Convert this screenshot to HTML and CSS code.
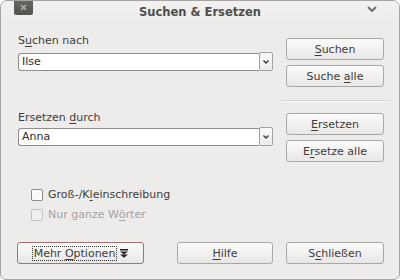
FILE: index.html
```html
<!DOCTYPE html>
<html lang="de">
<head>
    <meta charset="UTF-8">
    <title>Suchen &amp; Ersetzen</title>
    <link rel="stylesheet" href="styles.css">
</head>
<body>
    <div class="window">
        <div class="titlebar">
            <div class="tb-left">
                <span class="close-btn">
                    <svg width="7" height="7" viewBox="0 0 7 7"><path d="M1 1 L6 6 M6 1 L1 6" stroke="#b4b3b0" stroke-width="1.4"/></svg>
                </span>
            </div>
            <div class="title">Suchen &amp; Ersetzen</div>
            <div class="tb-right">
                <svg width="10" height="6" viewBox="0 0 10 6"><path d="M1 1 L5 5 L9 1" fill="none" stroke="#6f6e6c" stroke-width="2"/></svg>
            </div>
        </div>

        <div class="content">
            <div class="field-row first">
                <div class="field">
                    <div class="field-label">S<u>u</u>chen nach</div>
                    <div class="combo">
                        <div class="combo-text">Ilse</div>
                        <div class="combo-btn">
                            <svg width="6" height="4" viewBox="0 0 6 4"><path d="M0.5 0.5 L3 3 L5.5 0.5" fill="none" stroke="#333" stroke-width="1.3"/></svg>
                        </div>
                    </div>
                </div>
                <div class="btn-col">
                    <button class="btn"><u>S</u>uchen</button>
                    <button class="btn">Suche <u>a</u>lle</button>
                </div>
            </div>

            <div class="separator"></div>

            <div class="field-row second">
                <div class="field">
                    <div class="field-label">Ersetzen <u>d</u>urch</div>
                    <div class="combo">
                        <div class="combo-text">Anna</div>
                        <div class="combo-btn">
                            <svg width="6" height="4" viewBox="0 0 6 4"><path d="M0.5 0.5 L3 3 L5.5 0.5" fill="none" stroke="#333" stroke-width="1.3"/></svg>
                        </div>
                    </div>
                </div>
                <div class="btn-col">
                    <button class="btn"><u>E</u>rsetzen</button>
                    <button class="btn">E<u>r</u>setze alle</button>
                </div>
            </div>

            <div class="checks">
                <label class="check"><span class="box"></span>Groß-/K<u>l</u>einschreibung</label>
                <label class="check disabled"><span class="box"></span>Nur ganze W<u>ö</u>rter</label>
            </div>

            <div class="bottom-row">
                <button class="btn more-btn">
                    <span class="focus-ring">Mehr <u>O</u>ptionen</span>
                    <svg width="8" height="9" viewBox="0 0 8 9"><rect x="0" y="0" width="8" height="1.5" fill="#222"/><path d="M0 2.5 H8 L4 5.5 Z M0 5.5 H8 L4 8.8 Z" fill="#222"/></svg>
                </button>
                <button class="btn help-btn"><u>H</u>ilfe</button>
                <button class="btn close-dlg">S<u>c</u>hließen</button>
            </div>
        </div>
    </div>
</body>
</html>
```

FILE: styles.css
```css
/* Dialog Suchen & Ersetzen */
* {
    box-sizing: border-box;
}
body {
    margin: 0;
    background-color: #ffffff;
    font-family: "DejaVu Sans", sans-serif;
    font-size: 11px;
    color: #3c3c3c;
}
u {
    text-underline-offset: 2px;
}
.window {
    width: 400px;
    height: 280px;
    background-color: #edeceb;
    border: 1px solid #a6a5a3;
    border-radius: 7px 7px 6px 6px;
    overflow: hidden;
}
.titlebar {
    height: 23px;
    display: grid;
    grid-template-columns: 1fr auto 1fr;
    background: linear-gradient(#f2f1f0, #edeceb);
}
.tb-left {
    padding-left: 13px;
}
.close-btn {
    width: 19px;
    height: 15px;
    margin-top: -1px;
    display: flex;
    justify-content: center;
    align-items: center;
    background: linear-gradient(#676663, #545350);
    border-radius: 0 0 2px 2px;
}
.title {
    font-weight: bold;
    font-size: 11.5px;
    color: #4e4e4c;
    line-height: 22px;
}
.tb-right {
    display: flex;
    justify-content: flex-end;
    padding-right: 22px;
    padding-top: 5px;
}
.content {
    padding: 0 15px 0 17px;
}
.field-row {
    display: grid;
    grid-template-columns: 255px 98px;
    column-gap: 13px;
}
.field-row.first {
    margin-top: 9px;
}
.field-row.second {
    margin-top: 8px;
}
.field-label {
    line-height: 15px;
    margin-bottom: 5px;
}
.second .field-label {
    margin-bottom: 3px;
}
.combo {
    height: 18px;
    display: flex;
}
.combo-text {
    flex: 1;
    background-color: #ffffff;
    border: 1px solid #8f8e8c;
    border-right: none;
    border-radius: 3px 0 0 3px;
    padding-left: 3px;
    line-height: 16px;
    color: #2e2e2e;
}
.combo-btn {
    width: 14px;
    height: 19px;
    margin-top: -1px;
    display: flex;
    justify-content: center;
    align-items: center;
    padding-top: 1px;
    background: linear-gradient(#fafaf9, #edecea);
    border: 1px solid #a3a2a0;
    border-radius: 2px;
}
.btn-col {
    display: flex;
    flex-direction: column;
    gap: 5px;
    padding-top: 5px;
}
.second .btn-col {
    padding-top: 3px;
}
.btn {
    height: 22px;
    font-family: "DejaVu Sans", sans-serif;
    font-size: 11px;
    color: #3c3c3c;
    background: linear-gradient(#fbfbfa, #e8e7e5);
    border: 1px solid #a9a8a6;
    border-radius: 3px;
    padding: 0;
}
.separator {
    margin: 13px -6px 0 263px;
    height: 2px;
    border-top: 1px solid #d2d1cf;
    border-bottom: 1px solid #fafaf9;
}
.checks {
    margin-top: 25px;
    padding-left: 13px;
    display: flex;
    flex-direction: column;
    gap: 5px;
}
.check {
    display: flex;
    align-items: center;
    line-height: 15px;
}
.box {
    width: 12px;
    height: 12px;
    margin-right: 5px;
    background-color: #fbfbfa;
    border: 1px solid #8b8a88;
    border-radius: 2px;
}
.check.disabled {
    color: #a2a1a0;
}
.check.disabled .box {
    border-color: #c2c1bf;
    background-color: #f1f0ef;
}
.bottom-row {
    margin-top: 20px;
    display: flex;
}
.more-btn {
    width: 127px;
    margin-left: -1px;
    display: flex;
    justify-content: center;
    align-items: center;
    gap: 4px;
    border-color: #a5736f;
}
.focus-ring {
    outline: 1px dotted #333;
    padding: 0 1px;
    line-height: 13px;
}
.help-btn {
    width: 96px;
    margin-left: auto;
}
.close-dlg {
    width: 98px;
    margin-left: 13px;
}
```
